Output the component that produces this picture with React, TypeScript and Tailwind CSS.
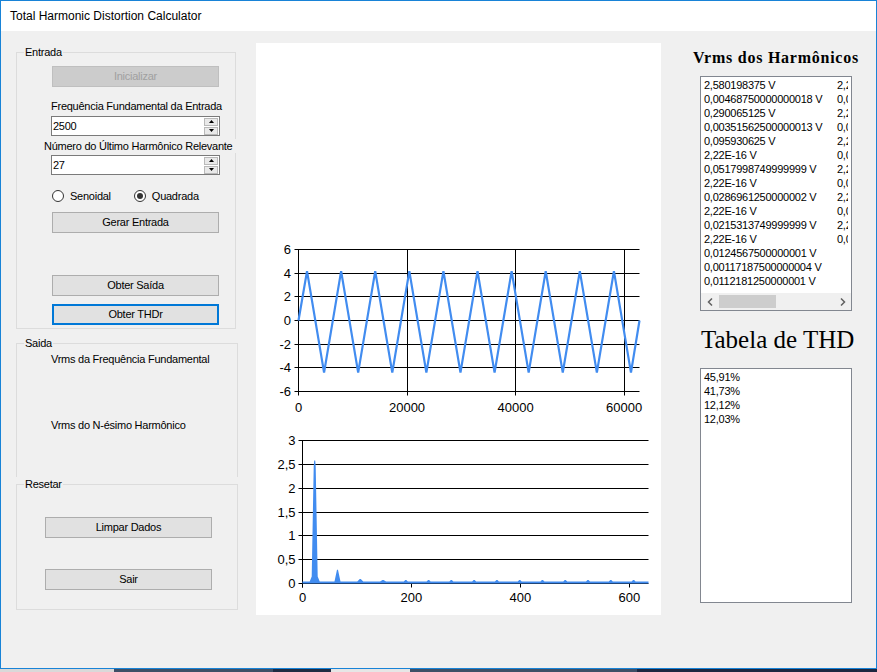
import React from "react";

// harmonic Vrms values shown in the first list column
const vrms = [
  "2,580198375 V",
  "0,00468750000000018 V",
  "0,290065125 V",
  "0,00351562500000013 V",
  "0,095930625 V",
  "2,22E-16 V",
  "0,0517998749999999 V",
  "2,22E-16 V",
  "0,0286961250000002 V",
  "2,22E-16 V",
  "0,0215313749999999 V",
  "2,22E-16 V",
  "0,0124567500000001 V",
  "0,00117187500000004 V",
  "0,0112181250000001 V",
];
// second column only peeks in at the list's right edge
const vrmsCol2 = Array.from({ length: 12 }, (_, i) => (i % 2 === 0 ? "2,22E-16 V" : "0,003 V"));
const thd = ["45,91%", "41,73%", "12,12%", "12,03%"];

type BtnProps = { label: string; className?: string; disabled?: boolean; focused?: boolean };

function Btn({ label, className = "", disabled = false, focused = false }: BtnProps) {
  let tone = "border border-[#adadad] bg-[#e1e1e1] text-black";
  if (disabled) tone = "border border-[#bfbfbf] bg-[#cccccc] text-[#a0a0a0]";
  if (focused) tone = "border-2 border-[#0078d7] bg-[#e1e1e1] text-black";
  return (
    <div className={`flex h-[21px] w-[167px] shrink-0 items-center justify-center leading-none ${tone} ${className}`}>
      {label}
    </div>
  );
}

function SpinArrow({ up = false }: { up?: boolean }) {
  return (
    <div className="flex h-[8px] w-[14px] items-center justify-center border border-[#b9b9b9] bg-[#e9e9e9]">
      <svg width="5" height="3" viewBox="0 0 5 3">
        <path d={up ? "M0 3 L2.5 0 L5 3 Z" : "M0 0 L2.5 3 L5 0 Z"} fill="#000" />
      </svg>
    </div>
  );
}

function Spin({ value, className = "" }: { value: string; className?: string }) {
  return (
    <div className={`flex h-[20px] w-[169px] shrink-0 items-center border border-[#7a7a7a] bg-white ${className}`}>
      <span className="flex-1 pl-px leading-none">{value}</span>
      <div className="mr-px flex flex-col gap-px">
        <SpinArrow up />
        <SpinArrow />
      </div>
    </div>
  );
}

function Radio({ label, checked = false }: { label: string; checked?: boolean }) {
  return (
    <div className="flex items-center">
      <span className="flex h-[12px] w-[12px] items-center justify-center rounded-full border border-[#333] bg-white">
        {checked && <span className="h-[6px] w-[6px] rounded-full bg-[#333]" />}
      </span>
      <span className="ml-[6px] leading-none">{label}</span>
    </div>
  );
}

function GroupTitle({ title }: { title: string }) {
  return <span className="absolute left-[7px] top-[-8px] bg-[#f0f0f0] px-px leading-[14px]">{title}</span>;
}

// time-domain plot: triangle wave, 10 periods over 0..2π·10⁴
function WaveChart() {
  const x0 = 42.5, x1 = 383.5, yT = 206.5, yB = 348.5;
  const xMax = 62832;
  const sx = (v: number) => x0 + (v / xMax) * (x1 - x0);
  const sy = (v: number) => yB - ((v + 6) / 12) * (yB - yT);
  const crisp = (y: number) => Math.round(y - 0.5) + 0.5;
  const P = xMax / 10;
  const pts: string[] = [`${sx(0)},${sy(0)}`];
  for (let k = 0; k < 10; k++) {
    pts.push(`${sx(k * P + P / 4)},${sy(4.17)}`);
    pts.push(`${sx(k * P + (3 * P) / 4)},${sy(-4.4)}`);
  }
  pts.push(`${sx(xMax)},${sy(0)}`);
  const yTicks = [6, 4, 2, 0, -2, -4, -6];
  const xTicks = [0, 20000, 40000, 60000];
  return (
    <g>
      {yTicks.map((v) => (
        <line key={v} x1={x0 - 4} x2={x1} y1={crisp(sy(v))} y2={crisp(sy(v))} stroke="#000" />
      ))}
      {xTicks.map((v) => (
        <line key={v} x1={crisp(sx(v))} x2={crisp(sx(v))} y1={yT} y2={yB + 4} stroke="#000" />
      ))}
      {yTicks.map((v) => (
        <text key={v} x={35} y={sy(v) + 4.5} fontSize={13} textAnchor="end" fill="#000">
          {v}
        </text>
      ))}
      {xTicks.map((v) => (
        <text key={v} x={sx(v)} y={368.5} fontSize={13} textAnchor="middle" fill="#000">
          {v}
        </text>
      ))}
      <polyline points={pts.join(" ")} fill="none" stroke="#418cf0" strokeWidth={2.2} strokeLinejoin="miter" />
    </g>
  );
}

// spectrum plot: odd harmonics as narrow filled peaks
function SpectrumChart() {
  const x0 = 46.5, x1 = 392.5, yT = 397.5, yB = 540.5;
  const xMax = 635;
  const sx = (v: number) => x0 + (v / xMax) * (x1 - x0);
  const sy = (v: number) => yB - (v / 3) * (yB - yT);
  const crisp = (y: number) => Math.round(y - 0.5) + 0.5;
  const heights = [2.58, 0.29, 0.0959, 0.0518, 0.0287, 0.0215, 0.0125, 0.0112, 0.011, 0.01, 0.01, 0.01, 0.01, 0.01, 0.01];
  const base = yB - 2;
  const pts: string[] = [`${x0},${yB}`, `${x0},${base}`];
  heights.forEach((h, k) => {
    const c = sx(22.4 + 41.8 * k);
    const top = Math.min(sy(h), base - 1.5);
    if (k === 0) {
      pts.push(`${c - 5},${base}`, `${c - 3},${base - 5}`, `${c - 1},${top + 6}`, `${c - 0.5},${top}`);
      pts.push(`${c + 0.5},${top}`, `${c + 1},${top + 6}`, `${c + 3},${base - 5}`, `${c + 5},${base}`);
    } else {
      const hw = h > 0.05 ? 3 : 2;
      pts.push(`${c - hw},${base}`, `${c - 0.5},${top}`, `${c + 0.5},${top}`, `${c + hw},${base}`);
    }
  });
  pts.push(`${x1},${base}`, `${x1},${yB}`);
  const yTicks = [
    [3, "3"],
    [2.5, "2,5"],
    [2, "2"],
    [1.5, "1,5"],
    [1, "1"],
    [0.5, "0,5"],
    [0, "0"],
  ] as const;
  const xTicks = [0, 200, 400, 600];
  return (
    <g>
      {yTicks.map(([v]) => (
        <line key={v} x1={x0 - 4} x2={x1} y1={crisp(sy(v))} y2={crisp(sy(v))} stroke="#000" />
      ))}
      <line x1={x0} x2={x0} y1={yT} y2={yB + 4} stroke="#000" />
      {xTicks.map((v) => (
        <line key={v} x1={crisp(sx(v))} x2={crisp(sx(v))} y1={yB} y2={yB + 4} stroke="#000" />
      ))}
      {yTicks.map(([v, t]) => (
        <text key={v} x={39.5} y={sy(v) + 4.5} fontSize={13} textAnchor="end" fill="#000">
          {t}
        </text>
      ))}
      {xTicks.map((v) => (
        <text key={v} x={sx(v)} y={558.5} fontSize={13} textAnchor="middle" fill="#000">
          {v}
        </text>
      ))}
      <polygon points={pts.join(" ")} fill="#418cf0" />
    </g>
  );
}

function Chevron({ right = false }: { right?: boolean }) {
  return (
    <svg width="6" height="8" viewBox="0 0 6 8">
      <path d={right ? "M1 0.5 L4.5 4 L1 7.5" : "M5 0.5 L1.5 4 L5 7.5"} fill="none" stroke="#606060" strokeWidth={1.5} />
    </svg>
  );
}

export default function App() {
  return (
    <div className="h-[672px] w-[877px] overflow-hidden bg-[#1c2740] font-['Liberation_Sans',Arial,sans-serif] text-[11px] tracking-[-0.25px] text-black">
      <div className="flex h-[669px] flex-col border border-[#1883d7] bg-[#f0f0f0]">
        {/* title bar */}
        <div className="flex h-[30px] shrink-0 items-center bg-white pl-[9px] text-[12px] tracking-normal">
          Total Harmonic Distortion Calculator
        </div>

        <div className="flex flex-1 pl-[15px]">
          {/* left column */}
          <div className="mt-[21px] flex w-[222px] shrink-0 flex-col">
            <div className="relative flex h-[277px] w-[220px] flex-col border border-[#dcdcdc]">
              <GroupTitle title="Entrada" />
              <Btn label="Inicializar" disabled className="ml-[35px] mt-[13px]" />
              <div className="ml-[34px] mt-[12px] h-[14px] leading-[14px]">Frequência Fundamental da Entrada</div>
              <Spin value="2500" className="ml-[34px] mt-[3px]" />
              <div className="ml-[27px] mt-[3px] h-[14px] w-[200px] shrink-0 bg-[#f0f0f0] leading-[14px]">
                Número do Último Harmônico Relevante
              </div>
              <Spin value="27" className="ml-[34px] mt-[2px]" />
              <div className="ml-[35px] mt-[14px] flex h-[14px] items-center gap-[23px]">
                <Radio label="Senoidal" />
                <Radio label="Quadrada" checked />
              </div>
              <Btn label="Gerar Entrada" className="ml-[35px] mt-[9px]" />
              <Btn label="Obter Saída" className="ml-[35px] mt-[42px]" />
              <Btn label="Obter THDr" focused className="ml-[35px] mt-[8px]" />
            </div>

            <div className="relative mt-[14px] flex h-[134px] w-[222px] flex-col border-x border-t border-[#dcdcdc]">
              <GroupTitle title="Saida" />
              <div className="ml-[34px] mt-[8px] h-[14px] leading-[14px]">Vrms da Frequência Fundamental</div>
              <div className="ml-[34px] mt-[52px] h-[14px] leading-[14px]">Vrms do N-ésimo Harmônico</div>
            </div>

            <div className="relative mt-[7px] flex h-[126px] w-[222px] flex-col border border-[#dcdcdc]">
              <GroupTitle title="Resetar" />
              <Btn label="Limpar Dados" className="ml-[28px] mt-[32px]" />
              <Btn label="Sair" className="ml-[28px] mt-[31px]" />
            </div>
          </div>

          {/* charts */}
          <div className="ml-[18px] mt-[12px] h-[572px] w-[405px] shrink-0 bg-white tracking-normal">
            <svg width="405" height="572" viewBox="0 0 405 572">
              <WaveChart />
              <SpectrumChart />
            </svg>
          </div>

          {/* right column */}
          <div className="ml-[20px] flex w-[190px] shrink-0 flex-col">
            <div className="ml-[12px] mt-[17px] h-[20px] font-['Liberation_Serif',serif] text-[16px] font-bold leading-[20px] tracking-[0.75px]">
              Vrms dos Harmônicos
            </div>
            <div className="ml-[19px] mt-[8px] flex h-[235px] w-[152px] flex-col overflow-hidden border border-[#828790] bg-white">
              <div className="flex h-[216px] overflow-hidden pt-px">
                <div className="w-[133px] shrink-0 pl-[3px]">
                  {vrms.map((v, i) => (
                    <div key={i} className="h-[14px] whitespace-nowrap leading-[14px]">
                      {v}
                    </div>
                  ))}
                </div>
                <div className="w-[14px] shrink-0 overflow-hidden pl-[3px]">
                  {vrmsCol2.map((v, i) => (
                    <div key={i} className="h-[14px] whitespace-nowrap leading-[14px]">
                      {v}
                    </div>
                  ))}
                </div>
              </div>
              <div className="flex h-[17px] items-center bg-[#f0f0f0]">
                <div className="flex w-[17px] justify-center">
                  <Chevron />
                </div>
                <div className="ml-px h-[13px] w-[57px] bg-[#cdcdcd]" />
                <div className="flex-1" />
                <div className="flex w-[17px] justify-center">
                  <Chevron right />
                </div>
              </div>
            </div>

            <div className="ml-[20px] mt-[14px] h-[30px] font-['Liberation_Serif',serif] text-[25px] leading-[30px] tracking-normal">
              Tabela de THD
            </div>
            <div className="ml-[19px] mt-[13px] h-[235px] w-[152px] border border-[#828790] bg-white pl-[3px] pt-px">
              {thd.map((v) => (
                <div key={v} className="h-[14px] leading-[14px]">
                  {v}
                </div>
              ))}
            </div>
          </div>
        </div>
      </div>

      {/* taskbar sliver */}
      <div className="flex h-[3px]">
        <div className="w-[114px] bg-[#d9d9d9]" />
        <div className="w-[159px] bg-[#3e4f66]" />
        <div className="w-[58px] bg-[#1f2b42]" />
        <div className="w-[79px] bg-[#e6e6e6]" />
        <div className="w-[227px] bg-[#3e4f66]" />
        <div className="flex-1 bg-[#1c2740]" />
      </div>
    </div>
  );
}
